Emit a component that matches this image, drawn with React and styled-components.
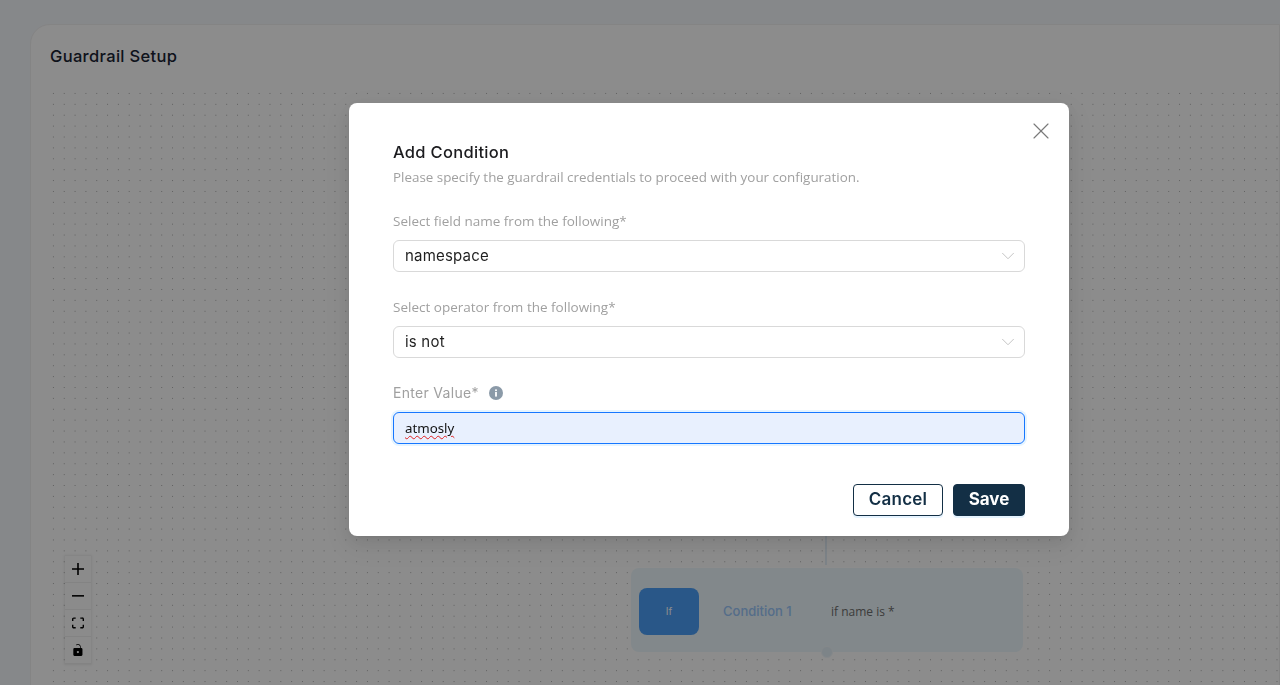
import React from "react";
import styled, { createGlobalStyle } from "styled-components";
import { ChevronDown, X } from "lucide-react";

const Global = createGlobalStyle`
  html, body { margin: 0; height: 100%; overflow: hidden; }
  body { background: #f5f7fb; font-family: "Inter", "Liberation Sans", sans-serif; }
  * { box-sizing: border-box; }
`;

const Page = styled.div`
  height: 685px;
  padding: 24px 0 0 30px;
  overflow: hidden;
`;

const Card = styled.section`
  height: 700px;
  background: #ffffff;
  border: 1px solid #f0f0f0;
  border-radius: 20px 0 0 0;
  padding: 21px 0 0 19px;
`;

const PageTitle = styled.h1`
  margin: 0;
  font: 500 16.5px/20px "Inter", sans-serif;
  letter-spacing: 0.33px;
  color: #1a2433;
`;

const Canvas = styled.div`
  position: relative;
  margin-top: 24px;
  height: 620px;
  background-image: radial-gradient(circle, #b0b0b0 0.6px, transparent 0.7px);
  background-size: 10.84px 10.9px;
  background-position: -2px -2px;
`;

const Controls = styled.div`
  position: absolute;
  left: 15px;
  top: 466px;
  display: flex;
  flex-direction: column;
  box-shadow: 0 0 2px 1px rgba(0, 0, 0, 0.08);
`;

const ControlButton = styled.button`
  width: 26px;
  height: 27px;
  padding: 5px;
  display: flex;
  align-items: center;
  justify-content: center;
  border: 0;
  border-bottom: 1px solid #eeeeee;
  background: #fefefe;
  svg { width: 12px; height: 12px; fill: #000; }
`;

const Connector = styled.div`
  position: absolute;
  left: 775px;
  top: 420px;
  width: 2px;
  height: 55px;
  background: #e3eef7;
`;

const FlowNode = styled.div`
  position: absolute;
  left: 581px;
  top: 478px;
  width: 392px;
  height: 84px;
  display: flex;
  align-items: center;
  padding: 2px 8px 0;
  background: #edf8fd;
  border-radius: 8px;
`;

const NodeBadge = styled.div`
  width: 60px;
  height: 47px;
  display: flex;
  align-items: center;
  justify-content: center;
  background: #4c9ff8;
  border-radius: 8px;
  color: #ffffff;
  font: 400 10px "Inter", sans-serif;
`;

const NodeName = styled.div`
  margin-left: 24px;
  width: 108px;
  font: 500 13px "Inter", sans-serif;
  color: #9ac6fa;
`;

const NodeRule = styled.div`
  font: 400 12px "Open Sans", sans-serif;
  color: #6e6e6e;
`;

const Handle = styled.div`
  position: absolute;
  left: 190px;
  bottom: -6px;
  width: 12px;
  height: 12px;
  border-radius: 50%;
  background: #e4f0f8;
  border: 1px solid #f2f8fc;
`;

const Overlay = styled.div`
  position: fixed;
  inset: 0;
  background: rgba(0, 0, 0, 0.45);
  display: flex;
  align-items: flex-start;
  justify-content: center;
  padding: 103px 0 0 138px;
`;

const Modal = styled.div`
  position: relative;
  width: 720px;
  height: 433px;
  background: #ffffff;
  border-radius: 8px;
  padding: 39px 44px 20px;
  box-shadow: 0 6px 16px rgba(0, 0, 0, 0.08), 0 3px 6px -4px rgba(0, 0, 0, 0.12),
    0 9px 28px 8px rgba(0, 0, 0, 0.05);
`;

const Close = styled.button`
  position: absolute;
  top: 14px;
  right: 14px;
  width: 28px;
  height: 28px;
  padding: 0;
  border: 0;
  background: none;
  color: #7a7a7a;
  display: flex;
  align-items: center;
  justify-content: center;
`;

const Title = styled.h2`
  margin: 0;
  font: 500 16.5px/20px "Inter", sans-serif;
  letter-spacing: 0.3px;
  color: #1c1c1f;
`;

const Description = styled.p`
  margin: 5px 0 0;
  font: 400 13.4px/20px "Open Sans", sans-serif;
  color: #a0a0a0;
`;

const Field = styled.div`
  margin-top: ${(p) => p.$top}px;
`;

const Label = styled.label`
  display: flex;
  align-items: center;
  gap: 10px;
  height: 20px;
  font: 400 13.5px/20px "Open Sans", sans-serif;
  color: #a0a0a0;
`;

const InputLabel = styled(Label)`
  font-family: "Inter", sans-serif;
  font-size: 14px;
  letter-spacing: 0.3px;
`;

const Select = styled.div`
  margin-top: 9px;
  height: 32px;
  padding: 0 11px 2px;
  display: flex;
  align-items: center;
  justify-content: space-between;
  border: 1px solid #d9d9d9;
  border-radius: 6px;
  font: 400 15px "Inter", sans-serif;
  letter-spacing: 0.2px;
  color: #1f1f1f;
  svg { color: #bfbfbf; margin: 2px -6px 0 0; }
`;

const ValueInput = styled.div`
  margin-top: 9px;
  height: 32px;
  padding: 0 11px;
  display: flex;
  align-items: center;
  background: #e8f0fe;
  border: 1px solid #1677ff;
  border-radius: 6px;
  box-shadow: 0 0 0 2px rgba(5, 145, 255, 0.1);
  font: 400 13.3px "Noto Sans", sans-serif;
  color: #111111;
`;

const Misspelled = styled.span`
  text-decoration: underline wavy #e02020 1.2px;
  text-underline-offset: 2px;
`;

const Footer = styled.div`
  margin-top: 40px;
  display: flex;
  justify-content: flex-end;
  gap: 10px;
`;

const Button = styled.button`
  height: 32px;
  width: ${(p) => p.$width}px;
  padding: 0 0 2px;
  border: 1px solid #132f45;
  border-radius: 4px;
  background: ${(p) => (p.$primary ? "#132f45" : "#ffffff")};
  color: ${(p) => (p.$primary ? "#ffffff" : "#132f45")};
  font: ${(p) => (p.$primary ? 700 : 600)} 17px "Inter", sans-serif;
  letter-spacing: ${(p) => (p.$primary ? 0 : 0.2)}px;
  box-shadow: 0 2px 0 rgba(5, 145, 255, 0.1);
`;

const InfoIcon = () => (
  <svg width="14" height="14" viewBox="0 0 14 14" aria-hidden="true">
    <circle cx="7" cy="7" r="7" fill="#8b9aa8" />
    <rect x="6.1" y="6" width="1.8" height="4.6" fill="#fff" />
    <rect x="6.1" y="3.4" width="1.8" height="1.7" fill="#fff" />
  </svg>
);

export default function App() {
  return (
    <>
      <Global />
      <Page>
        <Card>
          <PageTitle>Guardrail Setup</PageTitle>
          <Canvas>
            <Connector />
            <FlowNode>
              <NodeBadge>If</NodeBadge>
              <NodeName>Condition 1</NodeName>
              <NodeRule>if name is *</NodeRule>
              <Handle />
            </FlowNode>
            <Controls>
              <ControlButton aria-label="zoom in">
                <svg viewBox="0 0 32 32"><path d="M32 18.133H18.133V32h-4.266V18.133H0v-4.266h13.867V0h4.266v13.867H32z" /></svg>
              </ControlButton>
              <ControlButton aria-label="zoom out">
                <svg viewBox="0 0 32 5"><path d="M0 0h32v4.2H0z" /></svg>
              </ControlButton>
              <ControlButton aria-label="fit view">
                <svg viewBox="0 0 32 30"><path d="M3.692 4.63c0-.53.4-.938.939-.938h5.215V0H4.708C2.13 0 0 2.054 0 4.63v5.216h3.692V4.631zM27.354 0h-5.2v3.692h5.17c.53 0 .984.4.984.939v5.215H32V4.631A4.624 4.624 0 0027.354 0zm.954 24.83c0 .532-.4.94-.939.94h-5.215v3.768h5.215c2.577 0 4.631-2.13 4.631-4.707v-5.139h-3.692v5.139zm-23.677.94c-.531 0-.939-.4-.939-.94v-5.138H0v5.139c0 2.577 2.13 4.707 4.708 4.707h5.138V25.77H4.631z" /></svg>
              </ControlButton>
              <ControlButton aria-label="lock">
                <svg viewBox="0 0 25 32"><path d="M21.333 10.667H19.81V7.619C19.81 3.429 16.38 0 12.19 0c-1.743 0-3.429.61-4.762 1.714-.381.38-.496.952-.21 1.37.285.42.857.534 1.276.248C9.41 2.4 10.79 1.905 12.19 1.905c3.15 0 5.715 2.553 5.715 5.714v3.048H3.048A3.056 3.056 0 000 13.714v15.238A3.056 3.056 0 003.048 32h18.285a3.056 3.056 0 003.048-3.048V13.714a3.056 3.056 0 00-3.048-3.047zM12.19 24.533a3.056 3.056 0 01-3.047-3.047 3.056 3.056 0 013.047-3.048 3.056 3.056 0 013.048 3.048 3.056 3.056 0 01-3.048 3.047z" /></svg>
              </ControlButton>
            </Controls>
          </Canvas>
        </Card>
      </Page>
      <Overlay>
        <Modal>
          <Close aria-label="Close"><X size={28} strokeWidth={1} /></Close>
          <Title>Add Condition</Title>
          <Description>Please specify the guardrail credentials to proceed with your configuration.</Description>
          <Field $top={24}>
            <Label>Select field name from the following*</Label>
            <Select>namespace<ChevronDown size={22} strokeWidth={1} /></Select>
          </Field>
          <Field $top={25}>
            <Label>Select operator from the following*</Label>
            <Select>is not<ChevronDown size={22} strokeWidth={1} /></Select>
          </Field>
          <Field $top={25}>
            <InputLabel>Enter Value* <InfoIcon /></InputLabel>
            <ValueInput><Misspelled>atmosly</Misspelled></ValueInput>
          </Field>
          <Footer>
            <Button $width={90}>Cancel</Button>
            <Button $width={72} $primary>Save</Button>
          </Footer>
        </Modal>
      </Overlay>
    </>
  );
}
